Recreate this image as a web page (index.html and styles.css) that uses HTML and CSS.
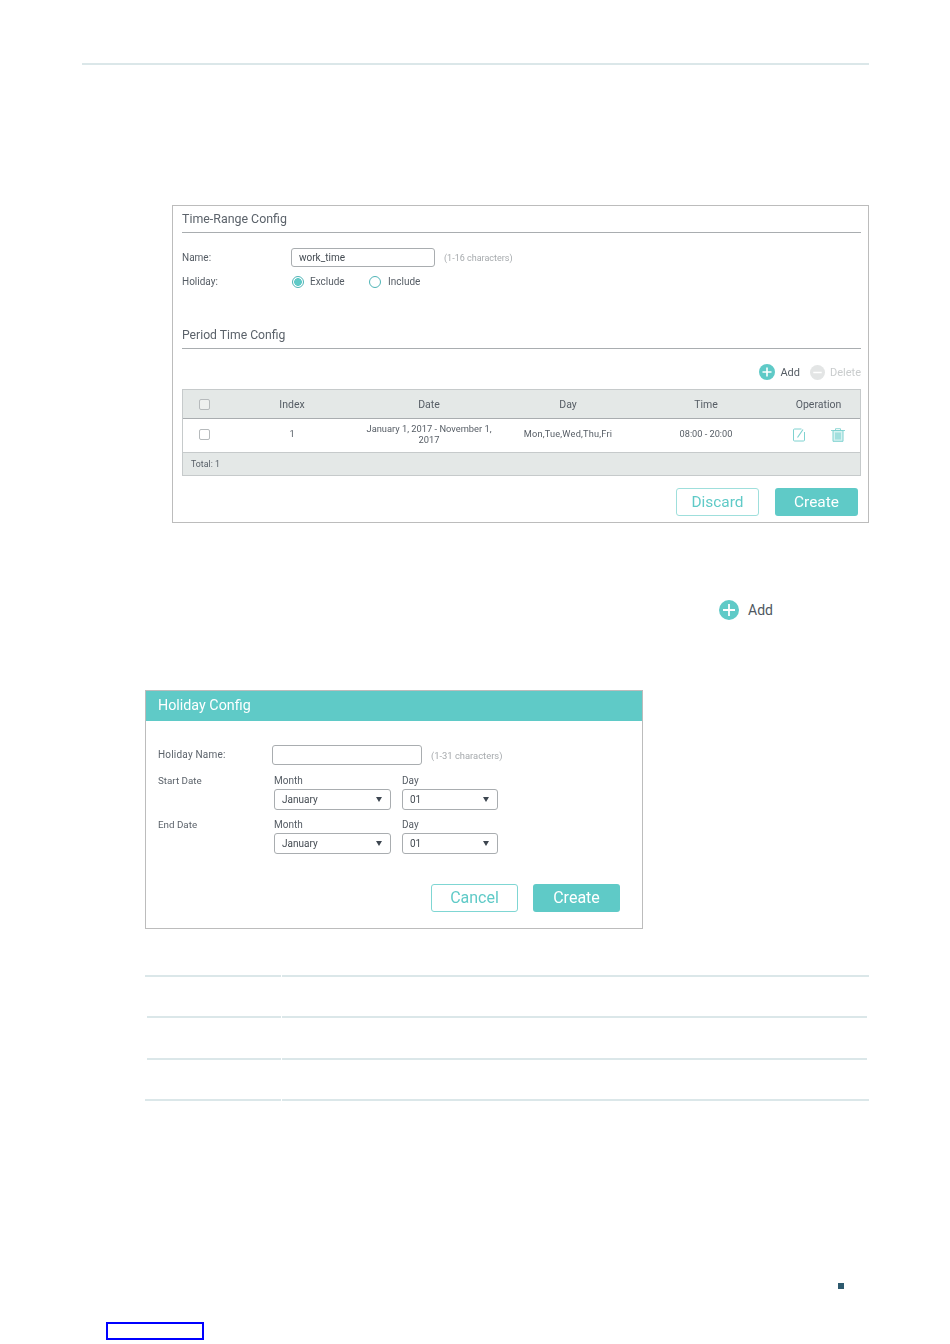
FILE: index.html
```html
<!DOCTYPE html>
<html lang="en">
<head>
<meta charset="utf-8">
<title>Time-Range Config</title>
<link rel="stylesheet" href="styles.css">
</head>
<body>
<div class="page">
  <div class="top-rule"></div>

  <section class="panel range-panel">
    <h2 class="section-title">Time-Range Config</h2>
    <div class="form-row name-row">
      <label class="row-label">Name:</label>
      <div class="text-input">work_time</div>
      <span class="hint hint-range">(1-16 characters)</span>
    </div>
    <div class="form-row holiday-row">
      <label class="row-label">Holiday:</label>
      <span class="radio on"></span><span class="radio-text first">Exclude</span>
      <span class="radio"></span><span class="radio-text second">Include</span>
    </div>
    <h2 class="section-title period-title">Period Time Config</h2>
    <div class="toolbar">
      <svg class="tool-icon" viewBox="0 0 16 16"><circle cx="8" cy="8" r="8" fill="#5fcac7"/><path d="M8 3.5v9M3.5 8h9" stroke="#fff" stroke-width="1.6"/></svg>
      <span class="tool-text">Add</span>
      <svg class="tool-icon delete-icon" viewBox="0 0 16 16"><circle cx="8" cy="8" r="8" fill="#e3e5e5"/><path d="M3.5 8h9" stroke="#fff" stroke-width="1.6"/></svg>
      <span class="tool-text muted">Delete</span>
    </div>
    <div class="table">
      <div class="t-row t-head">
        <div class="cell check-cell"><span class="check"></span></div>
        <div class="cell">Index</div>
        <div class="cell">Date</div>
        <div class="cell">Day</div>
        <div class="cell">Time</div>
        <div class="cell">Operation</div>
      </div>
      <div class="t-row t-body">
        <div class="cell check-cell"><span class="check"></span></div>
        <div class="cell">1</div>
        <div class="cell date-cell">January 1, 2017 - November 1, 2017</div>
        <div class="cell day-cell">Mon,Tue,Wed,Thu,Fri</div>
        <div class="cell">08:00 - 20:00</div>
        <div class="cell ops">
          <svg class="op-icon" viewBox="0 0 12 14"><path d="M8.5 1H1.5a1 1 0 0 0-1 1v10a1 1 0 0 0 1 1h9a1 1 0 0 0 1-1V4" fill="none" stroke="#7fd2d0"/><path d="M4.5 9.5 10 1.5" stroke="#7fd2d0" stroke-width="1.1"/></svg>
          <svg class="op-icon trash" viewBox="0 0 14 14"><path d="M0 2.5h14M4.5 2.5V.7h5v1.8" fill="none" stroke="#8fd8d6"/><path d="M2 2.5h10v10.8H2z" fill="#d6f2f1" stroke="#7fd2d0"/><path d="M5 4.5v7M7 4.5v7M9 4.5v7" stroke="#6fcdcb"/></svg>
        </div>
      </div>
      <div class="t-foot">Total: 1</div>
    </div>
    <div class="actions range-actions">
      <span class="btn btn-ghost discard">Discard</span>
      <span class="btn btn-solid">Create</span>
    </div>
  </section>

  <div class="add-line">
    <svg class="add-big" viewBox="0 0 20 20"><circle cx="10" cy="10" r="10" fill="#5fcac7"/><path d="M10 4v12M4 10h12" stroke="#fff" stroke-width="1.8"/></svg>
    <span class="add-text">Add</span>
  </div>

  <section class="panel holiday-panel">
    <header class="modal-head">Holiday Config</header>
    <div class="modal-body">
      <div class="h-name">
        <label class="h-label strong">Holiday Name:</label>
        <div class="text-input blank"></div>
        <span class="hint">(1-31 characters)</span>
      </div>
      <div class="date-grid">
        <label class="h-label">Start Date</label>
        <div class="field"><span class="f-cap">Month</span><div class="select month"><span>January</span><i class="caret"></i></div></div>
        <div class="field"><span class="f-cap">Day</span><div class="select day"><span>01</span><i class="caret"></i></div></div>
        <label class="h-label">End Date</label>
        <div class="field"><span class="f-cap">Month</span><div class="select month"><span>January</span><i class="caret"></i></div></div>
        <div class="field"><span class="f-cap">Day</span><div class="select day"><span>01</span><i class="caret"></i></div></div>
      </div>
      <div class="actions modal-actions">
        <span class="btn btn-ghost cancel">Cancel</span>
        <span class="btn btn-solid modal-create">Create</span>
      </div>
    </div>
  </section>

  <div class="empty-table">
    <div class="e-row first"><span></span><span></span></div>
    <div class="e-row inner second"><span></span><span></span></div>
    <div class="e-row inner third"><span></span><span></span></div>
    <div class="e-row last"><span></span><span></span></div>
  </div>

  <div class="page-mark"></div>
  <div class="blue-box"></div>
</div>
</body>
</html>
```
FILE: styles.css
```css
* { box-sizing: border-box; }
html, body { margin: 0; padding: 0; background: #fff; }
body { font-family: Roboto, "Liberation Sans", sans-serif; color: #565d65; }
.page { width: 950px; height: 1344px; overflow: hidden; padding-top: 63px; }

.top-rule { height: 2px; width: 787px; margin-left: 82px; background: #dbe7e9; }

.panel { border: 1px solid #bcbcbc; background: #fff; filter: blur(.3px); }
.range-panel { width: 697px; height: 318px; margin: 140px 0 0 172px; padding: 0 7px 0 9px; }

.section-title { margin: 0; height: 27px; border-bottom: 1px solid #a9adb0; font-size: 12.4px; line-height: 25px; font-weight: 400; color: #5c636b; }
.form-row { display: flex; align-items: center; font-size: 10px; }
.row-label { width: 109px; }
.name-row { margin-top: 15px; height: 19px; }
.text-input { width: 144px; height: 19px; border: 1px solid #a9adb0; border-radius: 3px; padding-left: 7px; line-height: 17px; font-size: 10px; color: #444b52; }
.hint { margin-left: 9px; font-size: 9.4px; color: #a6aaad; }
.hint-range { font-size: 9px; }
.holiday-row { margin-top: 5px; height: 19px; }
.radio { width: 12px; height: 12px; margin-left: 1px; margin-right: -1px; border: 1px solid #4fb4b6; border-radius: 50%; background: #fff; }
.radio.on { background: radial-gradient(circle, #5fcac7 0 3.6px, #fff 4.1px); }
.radio-text { margin-left: 7px; }
.radio-text.first { width: 58px; }
.radio-text.second { margin-left: 8px; }
.section-title.period-title { margin-top: 32px; height: 26px; font-size: 12.2px; }

.toolbar { display: flex; align-items: center; justify-content: flex-end; height: 16px; margin-top: 15px; font-size: 11px; }
.tool-icon { width: 16px; height: 16px; }
.tool-text { margin-left: 5px; }
.delete-icon { margin-left: 10px; width: 15px; height: 15px; }
.muted { color: #c9cccd; }

.table { margin-top: 9px; width: 679px; border: 1px solid #c6cacb; }
.t-row { display: grid; grid-template-columns: 44px 130px 144px 134px 142px 83px; text-align: center; align-items: center; }
.t-head { height: 29px; background: #e4e8e7; border-bottom: 1px solid #a9adb0; font-size: 10.5px; }
.t-body { height: 34px; padding-bottom: 2px; font-size: 9.2px; border-bottom: 1px solid #c6cacb; line-height: 10.5px; }
.date-cell { padding: 0 4px; font-size: 9.3px; }
.day-cell { letter-spacing: .2px; }
.check-cell { padding-right: 2px; }
.check { display: block; width: 11px; height: 11px; margin: 0 auto; border: 1px solid #b6babc; border-radius: 2px; background: #fff; }
.t-head .check { background: #eef0ef; }
.t-foot { height: 22px; background: #e4e8e7; font-size: 8.8px; line-height: 23px; padding-left: 8px; }
.ops { display: flex; align-items: center; justify-content: flex-start; padding-left: 16px; }
.op-icon { width: 12px; height: 14px; }
.trash { width: 14px; margin-left: 26px; }

.actions { display: flex; }
.range-actions { margin-top: 12px; padding-left: 494px; }
.btn { display: block; height: 28px; border-radius: 3px; font-size: 15.4px; line-height: 29px; text-align: center; width: 83px; }
.btn-ghost { border: 1px solid #9fdfdc; color: #5fcac7; line-height: 27px; }
.btn-solid { background: #5fcac7; color: #fff; }
.discard { margin-right: 16px; }

.add-line { display: flex; align-items: center; height: 20px; margin: 77px 0 0 719px; }
.add-big { width: 20px; height: 20px; }
.add-text { margin-left: 9px; font-size: 14px; color: #4f5760; }

.holiday-panel { width: 498px; height: 239px; margin: 70px 0 0 145px; }
.modal-head { height: 30px; background: #5fcac7; color: #fff; font-size: 14.3px; line-height: 29px; padding-left: 12px; }
.modal-body { padding: 24px 0 0 12px; }
.h-name { display: flex; align-items: center; height: 20px; }
.h-label { font-size: 9.8px; line-height: 12px; color: #5c636b; }
.h-name .h-label { width: 114px; }
.strong { font-size: 10px; letter-spacing: .2px; }
.h-name .text-input { width: 150px; height: 20px; }
.date-grid { display: grid; grid-template-columns: 116px 128px 96px; grid-auto-rows: 44px; margin-top: 10px; }
.field { display: flex; flex-direction: column; font-size: 10px; }
.f-cap { line-height: 12px; margin-bottom: 2px; }
.select { display: flex; align-items: center; justify-content: space-between; height: 21px; border: 1px solid #a9adb0; border-radius: 3px; padding: 0 8px 0 7px; color: #444b52; }
.select.month { width: 117px; }
.select.day { width: 96px; }
.caret { width: 0; height: 0; border-left: 3.5px solid transparent; border-right: 3.5px solid transparent; border-top: 5px solid #3d4650; }
.modal-actions { margin-top: 21px; padding-left: 273px; }
.btn.cancel { width: 87px; margin-right: 15px; border-color: #7fd6d3; font-size: 16px; line-height: 26px; }
.btn.modal-create { width: 87px; font-size: 16px; line-height: 28px; }

.empty-table { margin: 46px 0 0 145px; width: 724px; height: 126px; }
.e-row { display: grid; grid-template-columns: 136px 1fr; column-gap: 1px; height: 2px; margin-bottom: 39px; }
.e-row span { background: #dbe7e9; }
.e-row.inner { grid-template-columns: 134px 1fr; margin-left: 2px; margin-right: 2px; }
.e-row.second { margin-bottom: 40px; }
.e-row.last { margin-bottom: 0; }

.page-mark { width: 6px; height: 6px; margin: 182px 0 0 838px; background: #2e5a6e; }
.blue-box { width: 98px; height: 18px; margin: 33px 0 0 106px; border: 2px solid #0000ff; }
```
